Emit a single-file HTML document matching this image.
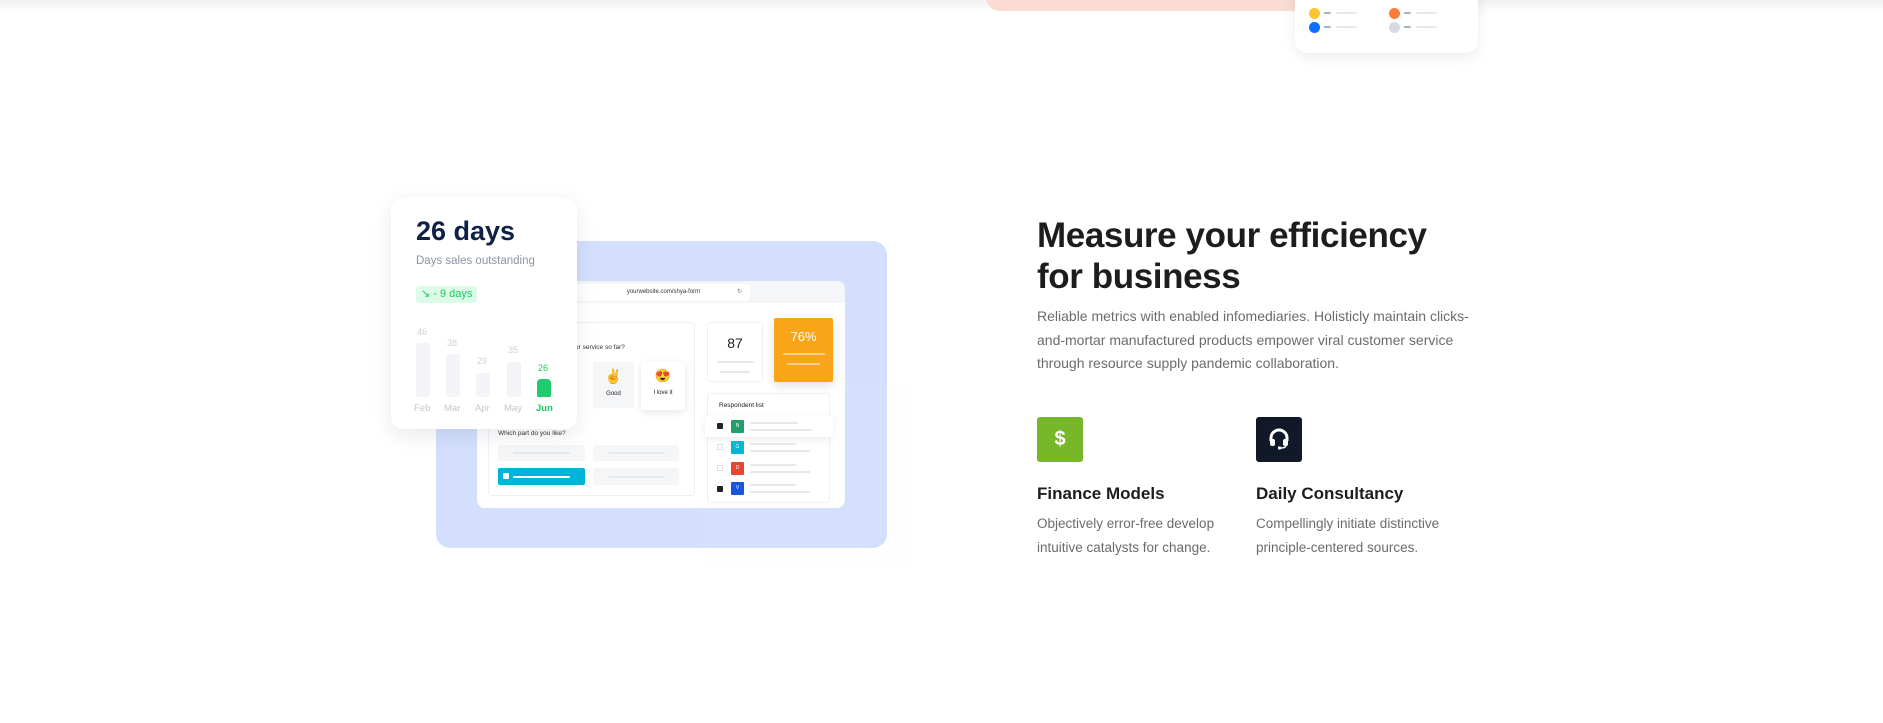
<!DOCTYPE html>
<html><head><meta charset="utf-8"><style>
*{margin:0;padding:0;box-sizing:border-box}
body{width:1883px;height:723px;background:#fff;position:relative;overflow:hidden;font-family:"Liberation Sans",sans-serif}
.a{position:absolute}
.line{position:absolute;height:2px;background:#e6e8ec;border-radius:1px}
.av{color:#fff;font-size:5px;text-align:center;line-height:13px}
</style></head><body>
<div class="a" style="left:0;top:0;width:1883px;height:14px;background:linear-gradient(#f1f1f3,#fff)"></div>
<div class="a" style="left:986px;top:-30px;width:320px;height:41px;background:#fadcd2;border-radius:0 0 0 14px"></div>
<div class="a" style="left:1295px;top:-20px;width:183px;height:73px;background:#fff;border-radius:12px;box-shadow:0 4px 14px rgba(0,0,0,.08)"></div>
<div class="a" style="left:1309px;top:8px;width:11px;height:11px;border-radius:50%;background:#fbc531"></div>
<div class="a" style="left:1309px;top:22px;width:11px;height:11px;border-radius:50%;background:#0d6efd"></div>
<div class="a" style="left:1389px;top:8px;width:11px;height:11px;border-radius:50%;background:#fa7b3c"></div>
<div class="a" style="left:1389px;top:22px;width:11px;height:11px;border-radius:50%;background:#d5d9e2"></div>
<div class="line" style="left:1324px;top:12px;width:7px;background:#aab1bf"></div><div class="line" style="left:1336px;top:12px;width:21px"></div>
<div class="line" style="left:1324px;top:26px;width:7px;background:#aab1bf"></div><div class="line" style="left:1336px;top:26px;width:21px"></div>
<div class="line" style="left:1404px;top:12px;width:7px;background:#aab1bf"></div><div class="line" style="left:1416px;top:12px;width:21px"></div>
<div class="line" style="left:1404px;top:26px;width:7px;background:#aab1bf"></div><div class="line" style="left:1416px;top:26px;width:21px"></div>

<div class="a" style="left:436px;top:241px;width:451px;height:307px;background:#d3dffd;border-radius:14px"></div>
<div class="a" style="left:700px;top:380px;width:215px;height:190px;background-image:radial-gradient(#eef0f6 1px,transparent 1.3px);background-size:8px 8px;opacity:.35;z-index:0"></div>
<div class="a" style="left:477px;top:281px;width:368px;height:227px;background:#fff;border-radius:8px;overflow:hidden;z-index:1">
  <div class="a" style="left:0;top:0;width:368px;height:22px;background:#f5f6f8"></div>
  <div class="a" style="left:100px;top:3px;width:173px;height:17px;background:#fff;border-radius:3px;font-size:6px;color:#333;text-align:center;line-height:17px">yourwebsite.com/shya-form<span style="position:absolute;right:8px;color:#777">↻</span></div>
  <div class="a" style="left:11px;top:41px;width:207px;height:174px;border:1px solid #eef0f3;border-radius:3px"></div>
  <div class="a" style="left:98px;top:63px;font-size:6.5px;color:#333">ur service so far?</div>
  <div class="a" style="left:116px;top:81px;width:41px;height:46px;background:#f5f6f8;border-radius:2px;text-align:center;font-size:6px;color:#222"><div style="font-size:14px;margin-top:6px">✌</div><div style="margin-top:6px">Good</div></div>
  <div class="a" style="left:164px;top:81px;width:44px;height:48px;background:#fff;border-radius:3px;box-shadow:0 2px 8px rgba(0,0,0,.1);text-align:center;font-size:6px;color:#222"><div style="font-size:13px;margin-top:6px">😍</div><div style="margin-top:6px">I love it</div></div>
  <div class="a" style="left:21px;top:149px;font-size:6.5px;color:#333">Which part do you like?</div>
  <div class="a" style="left:21px;top:164px;width:87px;height:16px;background:#f5f6f8;border-radius:2px"></div><div class="line" style="left:36px;top:171px;width:57px"></div>
  <div class="a" style="left:116px;top:164px;width:86px;height:16px;background:#f5f6f8;border-radius:2px"></div><div class="line" style="left:131px;top:171px;width:57px"></div>
  <div class="a" style="left:21px;top:187px;width:87px;height:17px;background:#00b4d8;border-radius:2px"></div>
  <div class="line" style="left:36px;top:195px;width:57px;background:#fff"></div><div class="a" style="left:26px;top:192px;width:6px;height:6px;background:#fff;border-radius:1px"></div>
  <div class="a" style="left:116px;top:187px;width:86px;height:17px;background:#f5f6f8;border-radius:2px"></div><div class="line" style="left:131px;top:195px;width:57px"></div>
  <div class="a" style="left:230px;top:41px;width:56px;height:60px;border:1px solid #eef0f3;border-radius:3px;text-align:center;font-size:14px;color:#222;padding-top:12px">87</div>
  <div class="line" style="left:240px;top:80px;width:37px"></div><div class="line" style="left:243px;top:90px;width:30px"></div>
  <div class="a" style="left:297px;top:37px;width:59px;height:64px;background:#f9a51a;border-radius:2px;box-shadow:0 4px 10px rgba(0,0,0,.12);text-align:center;font-size:13px;color:#fff;padding-top:11px">76%</div>
  <div class="line" style="left:306px;top:72px;width:42px;background:#fcd08a"></div><div class="line" style="left:310px;top:82px;width:33px;background:#fcd08a"></div>
  <div class="a" style="left:230px;top:112px;width:123px;height:110px;border:1px solid #eef0f3;border-radius:3px"></div>
  <div class="a" style="left:242px;top:121px;font-size:6.5px;color:#222">Respondent list</div>
  <div class="a" style="left:228px;top:135px;width:128px;height:21px;background:#fff;box-shadow:0 2px 8px rgba(0,0,0,.08)"></div>
  <div class="a" style="left:240px;top:142px;width:6px;height:6px;background:#222;border-radius:1px"></div>
  <div class="a av" style="left:254px;top:139px;width:13px;height:13px;background:#22a06b;border-radius:1px">N</div>
  <div class="line" style="left:273px;top:141px;width:48px"></div><div class="line" style="left:273px;top:148px;width:62px"></div>
  <div class="a" style="left:240px;top:163px;width:6px;height:6px;border:1px solid #ddd;border-radius:1px"></div>
  <div class="a av" style="left:254px;top:160px;width:13px;height:13px;background:#06b6d4;border-radius:1px">G</div>
  <div class="line" style="left:273px;top:162px;width:46px"></div><div class="line" style="left:273px;top:169px;width:60px"></div>
  <div class="a" style="left:240px;top:184px;width:6px;height:6px;border:1px solid #ddd;border-radius:1px"></div>
  <div class="a av" style="left:254px;top:181px;width:13px;height:13px;background:#e5482d;border-radius:1px">D</div>
  <div class="line" style="left:273px;top:183px;width:46px"></div><div class="line" style="left:273px;top:190px;width:60px"></div>
  <div class="a" style="left:240px;top:205px;width:6px;height:6px;background:#222;border-radius:1px"></div>
  <div class="a av" style="left:254px;top:201px;width:13px;height:13px;background:#1a56db;border-radius:1px">V</div>
  <div class="line" style="left:273px;top:203px;width:46px"></div><div class="line" style="left:273px;top:210px;width:60px"></div>
</div>
<div class="a" style="left:391px;top:198px;width:186px;height:231px;background:#fff;border-radius:12px;box-shadow:0 6px 20px rgba(30,40,80,.10);z-index:2">
  <div class="a" style="left:25px;top:18px;font-size:27px;font-weight:bold;color:#0f2147;white-space:nowrap">26 days</div>
  <div class="a" style="left:25px;top:57px;font-size:11.5px;color:#8a94a6;white-space:nowrap">Days sales outstanding</div>
  <div class="a" style="left:25px;top:88px;width:61px;height:17px;background:#dcfce7;border-radius:3px;font-size:11px;color:#22c55e;line-height:17px;padding-left:5px;white-space:nowrap">↘ - 9 days</div>
  <div class="a" style="left:25px;top:145px;width:14px;height:54px;background:#f3f4f8;border-radius:3px"></div>
  <div class="a" style="left:55px;top:156px;width:14px;height:43px;background:#f3f4f8;border-radius:3px"></div>
  <div class="a" style="left:85px;top:175px;width:14px;height:24px;background:#f3f4f8;border-radius:3px"></div>
  <div class="a" style="left:116px;top:164px;width:14px;height:35px;background:#f3f4f8;border-radius:3px"></div>
  <div class="a" style="left:146px;top:181px;width:14px;height:18px;background:#1fcb6d;border-radius:4px 4px 1px 1px"></div>
  <div class="a" style="font-size:9px;color:#ccd0d8;left:26px;top:129px">46</div>
  <div class="a" style="font-size:9px;color:#ccd0d8;left:56px;top:140px">38</div>
  <div class="a" style="font-size:9px;color:#ccd0d8;left:86px;top:158px">29</div>
  <div class="a" style="font-size:9px;color:#ccd0d8;left:117px;top:147px">35</div>
  <div class="a" style="font-size:9px;color:#22c55e;left:147px;top:165px">26</div>
  <div class="a" style="font-size:9.5px;color:#c2c7d0;left:23px;top:205px">Feb</div>
  <div class="a" style="font-size:9.5px;color:#c2c7d0;left:53px;top:205px">Mar</div>
  <div class="a" style="font-size:9.5px;color:#c2c7d0;left:84px;top:205px">Apr</div>
  <div class="a" style="font-size:9.5px;color:#c2c7d0;left:113px;top:205px">May</div>
  <div class="a" style="font-size:9.5px;color:#22c55e;left:145px;top:205px;font-weight:bold">Jun</div>
</div>

<div class="a" style="left:1037px;top:215px;font-size:35px;font-weight:bold;color:#1d1d1f;line-height:41px;letter-spacing:-0.4px">Measure your efficiency<br>for business</div>
<div class="a" style="left:1037px;top:305px;width:440px;font-size:14px;line-height:23.5px;color:#6b6b6b">Reliable metrics with enabled infomediaries. Holisticly maintain clicks-and-mortar manufactured products empower viral customer service through resource supply pandemic collaboration.</div>
<div class="a" style="left:1037px;top:417px;width:46px;height:45px;background:#76b82a;border-radius:3px;color:#fff;font-size:20px;font-weight:bold;text-align:center;line-height:45px">$</div>
<div class="a" style="left:1256px;top:417px;width:46px;height:45px;background:#111827;border-radius:3px">
  <svg width="46" height="45" viewBox="0 0 46 45"><path d="M15 24v-3a8 8 0 0 1 16 0v3" fill="none" stroke="#fff" stroke-width="3"/><rect x="14" y="22" width="5" height="7" rx="2" fill="#fff"/><rect x="27" y="22" width="5" height="7" rx="2" fill="#fff"/><path d="M30 28q0 3-5 3" fill="none" stroke="#fff" stroke-width="1.5"/><circle cx="23.5" cy="31" r="1.6" fill="#fff"/></svg>
</div>
<div class="a" style="left:1037px;top:484px;font-size:17px;font-weight:bold;color:#1d1d1f">Finance Models</div>
<div class="a" style="left:1256px;top:484px;font-size:17px;font-weight:bold;color:#1d1d1f">Daily Consultancy</div>
<div class="a" style="left:1037px;top:512px;font-size:13.5px;line-height:24px;color:#6b6b6b">Objectively error-free develop<br>intuitive catalysts for change.</div>
<div class="a" style="left:1256px;top:512px;font-size:13.5px;line-height:24px;color:#6b6b6b">Compellingly initiate distinctive<br>principle-centered sources.</div>
</body></html>
